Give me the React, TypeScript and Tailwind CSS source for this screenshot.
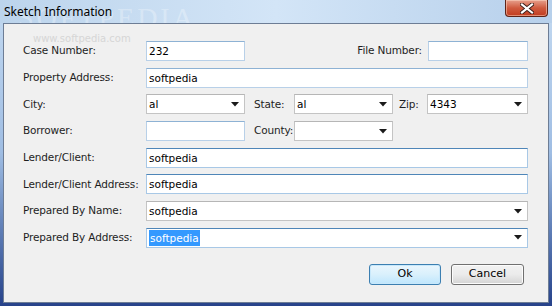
import React from 'react';

const labelFont = { fontFamily: '"DejaVu Sans", Tahoma, sans-serif' };

const Arrow = () => (
  <svg width="8" height="5" viewBox="0 0 8 5" className="shrink-0" aria-hidden>
    <path d="M0 0h8L4 4.5z" fill="#1a1a1a" />
  </svg>
);

type BoxProps = { value?: string; width: string; combo?: boolean; focused?: boolean; selected?: boolean };

const Field: React.FC<BoxProps> = ({ value, width, combo, focused, selected }) => {
  const border = focused
    ? 'border-[#a8c8e6] border-t-[#4f86b8]'
    : combo
      ? 'border-[#c4c4c4] border-t-[#b6b6b6]'
      : 'border-[#b8d0e8] border-t-[#8eb2d4]';
  return (
    <div
      className={`flex h-[20px] shrink-0 items-center border bg-white pl-[2px] pr-[5px] text-[10.5px] text-black ${border} ${width}`}
      style={labelFont}
    >
      <span className="flex-1 whitespace-nowrap leading-[14px]">
        {selected ? (
          <span className="bg-[#3399ff] px-[1px] py-[2px] text-white">{value}</span>
        ) : (
          value
        )}
      </span>
      {combo && <Arrow />}
    </div>
  );
};

const Label: React.FC<{ text: string; className?: string }> = ({ text, className = '' }) => (
  <span className={`shrink-0 whitespace-nowrap text-[10.5px] tracking-[-0.15px] text-[#1e1e1e] ${className}`} style={labelFont}>
    {text}
  </span>
);

const Btn: React.FC<{ text: string; primary?: boolean; w: string }> = ({ text, primary, w }) => (
  <button
    type="button"
    className={`h-[21px] ${w} rounded-[3px] border text-[11px] text-black ${
      primary
        ? 'border-[#3c7fb1] bg-gradient-to-b from-[#eaf6fd] via-[#d9f0fc] to-[#bee6fd] shadow-[inset_0_0_0_1px_#c8e8fb]'
        : 'border-[#707070] bg-gradient-to-b from-[#f2f2f2] via-[#ebebeb] to-[#d4d4d4] shadow-[inset_0_0_0_1px_#fcfcfc]'
    }`}
    style={labelFont}
  >
    {text}
  </button>
);

export default function App() {
  return (
    <div className="relative flex h-[306px] w-[552px] flex-col overflow-hidden bg-gradient-to-b from-[#c4daf1] via-[#9fbde3] to-[#27428a]">
      {/* title bar */}
      <div className="relative flex h-[23px] shrink-0 items-center bg-gradient-to-r from-[#bcd4ec] via-[#d3e5f7] to-[#b7d0eb] pl-[4px]">
        <span
          className="pointer-events-none absolute left-[18px] top-[4px] select-none text-[28px] leading-none tracking-[3px] text-white/30"
          style={{ fontFamily: '"Liberation Serif", serif' }}
        >
          SOFTPEDIA
        </span>
        <span className="relative text-[12px] text-black" style={{ fontFamily: '"Noto Sans", sans-serif' }}>
          Sketch Information
        </span>
        <div className="absolute right-[4px] top-0 flex h-[17px] w-[43px] items-center justify-center rounded-b-[4px] border border-t-0 border-[#5e2418] bg-gradient-to-b from-[#e6a08c] via-[#cf5a3e] to-[#c13c1f] shadow-[inset_0_0_0_1px_rgba(255,220,200,0.5)]">
          <svg width="14" height="11" viewBox="0 0 14 11" aria-hidden>
            <path d="M2 1.5l10 8M12 1.5l-10 8" stroke="#3a1d18" strokeWidth="4" strokeLinecap="square" />
            <path d="M2 1.5l10 8M12 1.5l-10 8" stroke="#ffffff" strokeWidth="2.2" strokeLinecap="square" />
          </svg>
        </div>
      </div>

      {/* client area */}
      <div className="relative mx-[3px] mb-[3px] flex flex-1 flex-col border border-[#6d7d95] bg-[#f0f0f0] pl-[19px] pr-[20px] pt-[17px]">
        <span className="pointer-events-none absolute left-[29px] top-[7px] text-[10px] text-[#d6d6d6]" style={labelFont}>
          www.softpedia.com
        </span>

        <div className="flex flex-col gap-[6.7px]">
          <div className="flex h-[20px] items-center">
            <Label text="Case Number:" className="w-[123px]" />
            <Field value="232" width="w-[99px]" />
            <div className="flex-1" />
            <Label text="File Number:" className="mr-[6px]" />
            <Field width="w-[100px]" />
          </div>
          <div className="flex h-[20px] items-center">
            <Label text="Property Address:" className="w-[123px]" />
            <Field value="softpedia" width="flex-1" />
          </div>
          <div className="flex h-[20px] items-center">
            <Label text="City:" className="w-[123px]" />
            <Field value="al" width="w-[99px]" combo />
            <Label text="State:" className="ml-[9px] w-[40px]" />
            <Field value="al" width="w-[99px]" combo />
            <Label text="Zip:" className="ml-[6px] w-[28px]" />
            <Field value="4343" width="flex-1" combo />
          </div>
          <div className="flex h-[20px] items-center">
            <Label text="Borrower:" className="w-[123px]" />
            <Field width="w-[99px]" />
            <Label text="County:" className="ml-[9px] w-[40px]" />
            <Field width="w-[99px]" combo />
          </div>
          <div className="flex h-[20px] items-center">
            <Label text="Lender/Client:" className="w-[123px]" />
            <Field value="softpedia" width="flex-1" focused />
          </div>
          <div className="flex h-[20px] items-center">
            <Label text="Lender/Client Address:" className="w-[123px]" />
            <Field value="softpedia" width="flex-1" focused />
          </div>
          <div className="flex h-[20px] items-center">
            <Label text="Prepared By Name:" className="w-[123px]" />
            <Field value="softpedia" width="flex-1" combo />
          </div>
          <div className="flex h-[20px] items-center">
            <Label text="Prepared By Address:" className="w-[123px]" />
            <Field value="softpedia" width="flex-1" combo focused selected />
          </div>
        </div>

        <div className="mt-[16px] flex justify-end gap-[10px] pr-[4px]">
          <Btn text="Ok" primary w="w-[72px]" />
          <Btn text="Cancel" w="w-[73px]" />
        </div>
      </div>
    </div>
  );
}
